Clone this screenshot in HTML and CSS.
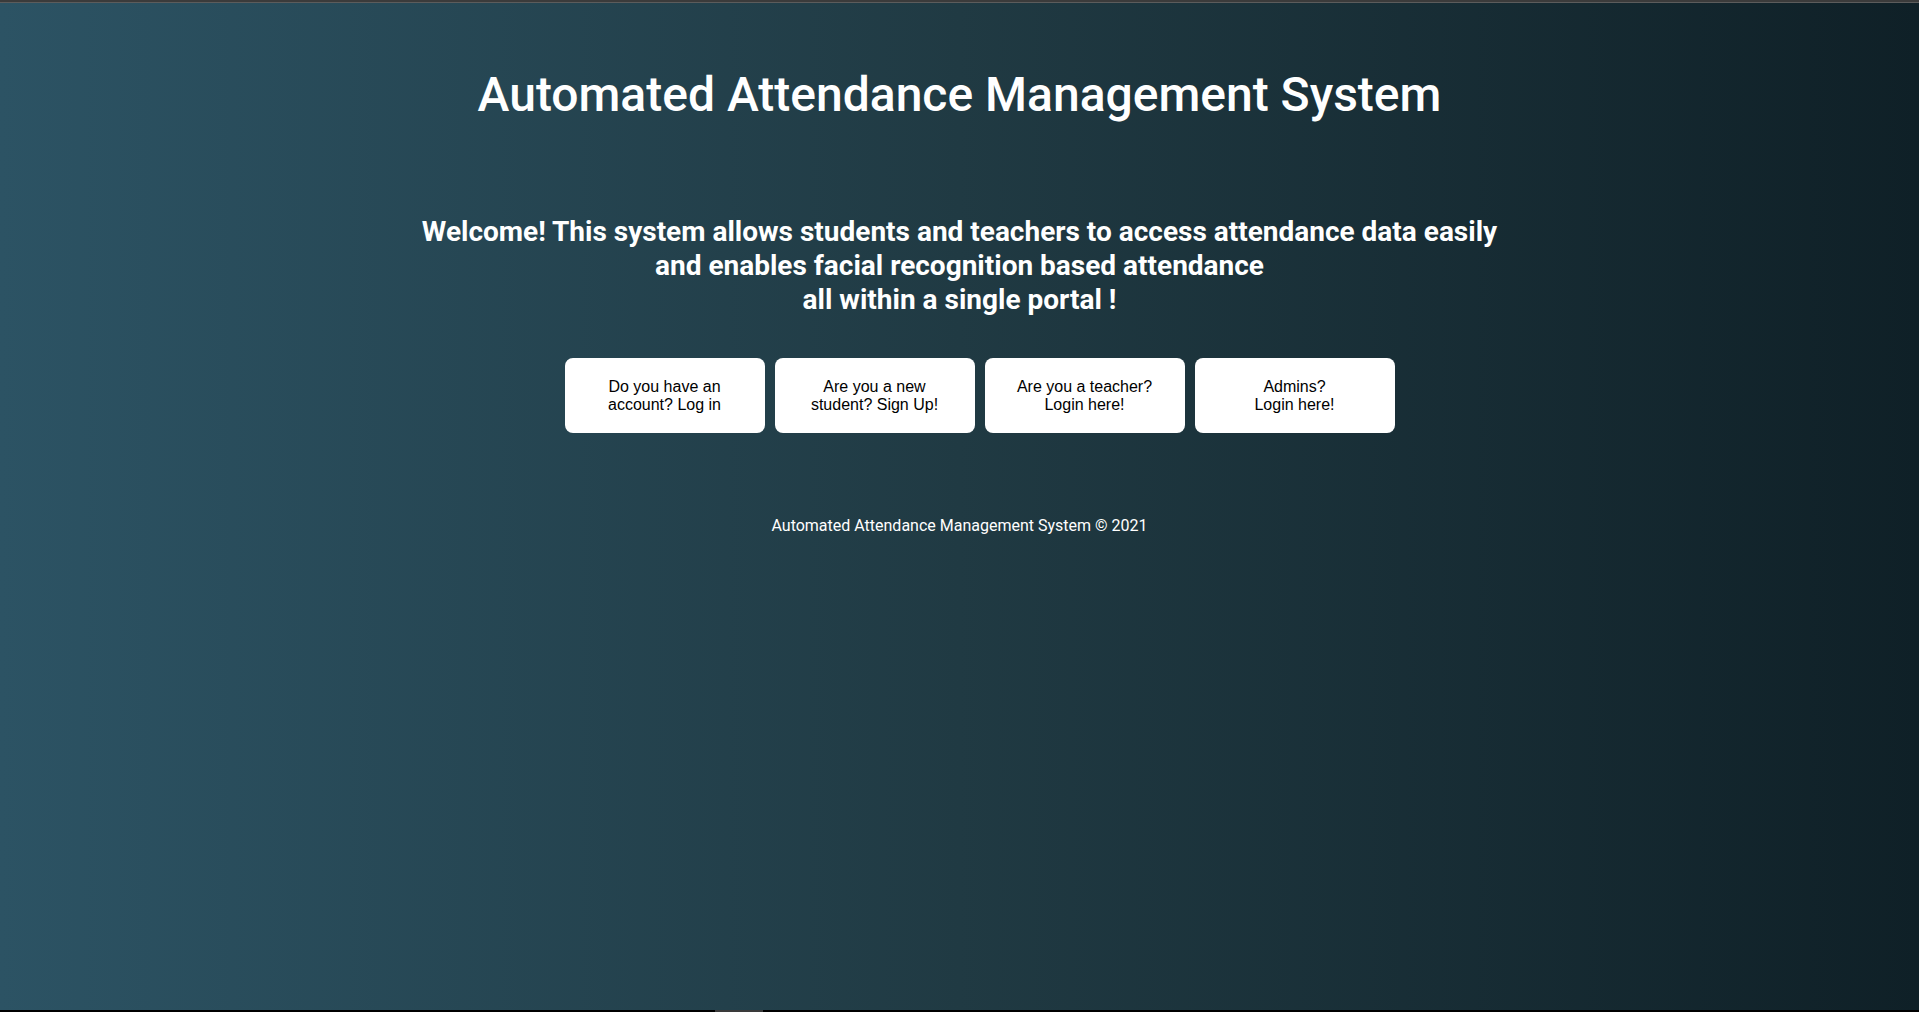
FILE: index.html
```html
<!DOCTYPE html>
<html lang="en">
<head>
<meta charset="utf-8">
<title>Automated Attendance Management System</title>
<link rel="stylesheet" href="styles.css">
</head>
<body>
<div class="topbar"></div>
<main class="page">
  <h1 class="title">Automated Attendance Management System</h1>
  <p class="welcome">Welcome! This system allows students and teachers to access attendance data easily<br>and enables facial recognition based attendance<br>all within a single portal !</p>
  <div class="actions">
    <button class="btn">Do you have an<br>account? Log in</button>
    <button class="btn">Are you a new<br>student? Sign Up!</button>
    <button class="btn">Are you a teacher?<br>Login here!</button>
    <button class="btn">Admins?<br>Login here!</button>
  </div>
  <footer class="footer">Automated Attendance Management System © 2021</footer>
</main>
<div class="bottombar"><span class="gap"></span><span class="thumb"></span></div>
</body>
</html>
```
FILE: styles.css
```css
html, body {
  margin: 0;
  padding: 0;
  height: 100%;
}
body {
  display: flex;
  flex-direction: column;
  background: #000;
  font-family: Roboto, "Liberation Sans", sans-serif;
  overflow: hidden;
}
.topbar {
  height: 2px;
  background: #3b3b3b;
  border-bottom: 1px solid #5c5c5c;
  flex: none;
}
.page {
  flex: 1;
  background: linear-gradient(to right, #2c5364, #203a43, #0f2027);
  color: #fff;
  display: flex;
  flex-direction: column;
  align-items: center;
}
.title {
  margin: 64px 0 0;
  font-size: 48px;
  font-weight: 500;
  line-height: 56px;
  letter-spacing: 0;
}
.welcome {
  margin: 92px 0 0;
  font-size: 28px;
  font-weight: 700;
  line-height: 34px;
  text-align: center;
  letter-spacing: 0;
}
.actions {
  margin: 41px 0 0 40px;
  display: flex;
  gap: 10px;
}
.btn {
  width: 200px;
  height: 75px;
  background: #fff;
  border: none;
  border-radius: 8px;
  font-family: "Liberation Sans", Arial, sans-serif;
  font-size: 16px;
  line-height: 18px;
  color: #000;
  padding: 0;
  text-align: center;
}
.footer {
  margin: 83px 0 0;
  font-size: 16px;
  line-height: 20px;
}
.bottombar {
  height: 2px;
  flex: none;
  display: flex;
  background: #000;
}
.gap {
  width: 715px;
}
.thumb {
  width: 48px;
  background: #3a3a3a;
}
```
